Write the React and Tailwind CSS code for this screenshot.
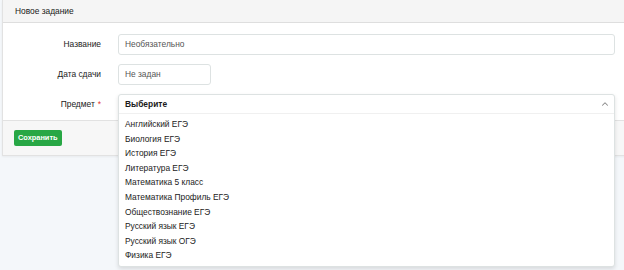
import { ChevronUp } from 'lucide-react'

const SUBJECTS = [
  'Английский ЕГЭ',
  'Биология ЕГЭ',
  'История ЕГЭ',
  'Литература ЕГЭ',
  'Математика 5 класс',
  'Математика Профиль ЕГЭ',
  'Обществознание ЕГЭ',
  'Русский язык ЕГЭ',
  'Русский язык ОГЭ',
  'Физика ЕГЭ',
]

function Row({ label, required, children }) {
  return (
    <div className="flex h-[20px] items-center">
      <div className="w-[99px] shrink-0 pr-[1px] text-right text-[8.4px] text-[#222]">
        {label}
        {required && <span className="ml-[3px] text-[#e3342f]">*</span>}
      </div>
      <div className="ml-[16px] flex-1">{children}</div>
    </div>
  )
}

export default function App() {
  return (
    <div className="h-[270px] w-full overflow-hidden bg-[#f4f7fa] font-['Liberation_Sans',Arial,sans-serif]">
      <div className="ml-[2px] mr-[-10px] border border-t-0 border-[#e2e2e2] bg-white shadow-[0_1px_2px_rgb(0_0_0_/_0.05)]">
        <div className="flex h-[23px] items-center border-b border-[#dedede] bg-[#f5f5f5] pl-[12px] text-[8.4px] text-[#1a1a1a]">
          Новое задание
        </div>

        <div className="flex flex-col gap-[10px] pb-[6px] pr-[18px] pt-[11px]">
          <Row label="Название">
            <div className="flex h-[21px] items-center rounded-[3px] border border-[#dde2e2] px-[6px] text-[8.4px] text-[#555]">
              Необязательно
            </div>
          </Row>
          <Row label="Дата сдачи">
            <div className="flex h-[21px] w-[93px] items-center rounded-[3px] border border-[#dde2e2] px-[6px] text-[8.4px] text-[#555]">
              Не задан
            </div>
          </Row>
          <Row label="Предмет" required>
            <div className="relative h-[20px]">
              <div className="absolute left-0 right-0 top-0 z-10 rounded-[3px] border border-[#dde2e2] bg-white shadow-[0_2px_4px_rgb(0_0_0_/_0.12)]">
                <div className="flex h-[19px] items-center justify-between border-b border-[#f0f0f0] pl-[6px] pr-[4px] text-[8.4px] font-bold text-[#1a1a1a]">
                  Выберите
                  <ChevronUp size={10} strokeWidth={2.5} className="text-[#888]" />
                </div>
                <ul className="py-[3px]">
                  {SUBJECTS.map((s) => (
                    <li key={s} className="flex h-[14.6px] items-center pl-[6px] text-[8.4px] text-[#222]">
                      {s}
                    </li>
                  ))}
                </ul>
              </div>
            </div>
          </Row>
        </div>

        <div className="flex h-[35px] items-center border-t border-[#e2e2e2] bg-[#f7f7f7] pl-[11px]">
          <button className="h-[16px] rounded-[2px] bg-[#28a745] px-[4px] text-[7.4px] font-bold leading-none text-white">
            Сохранить
          </button>
        </div>
      </div>
    </div>
  )
}
